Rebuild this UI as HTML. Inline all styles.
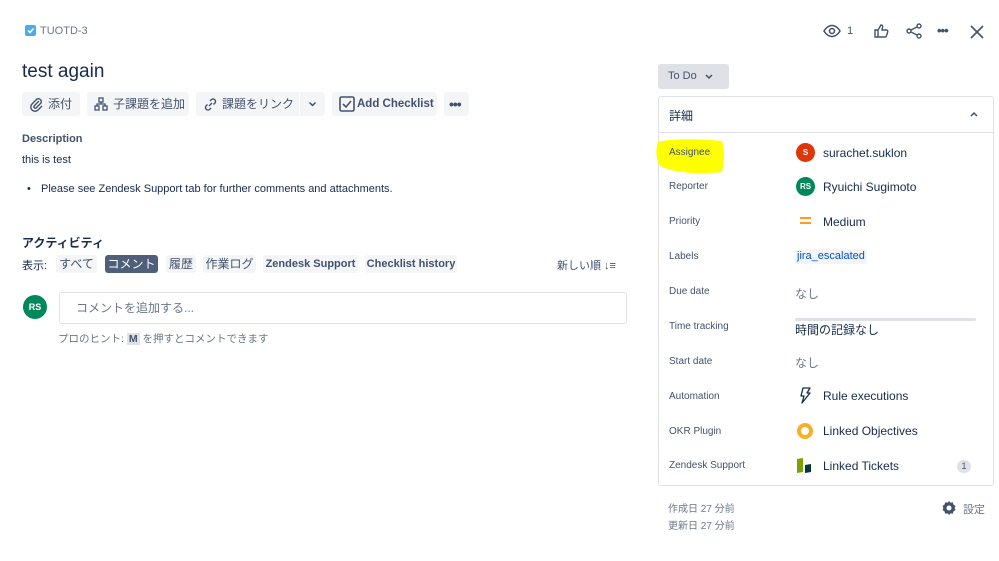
<!DOCTYPE html>
<html><head><meta charset="utf-8"><style>
*{margin:0;padding:0;box-sizing:border-box}
body{width:999px;height:561px;background:#fff;font-family:"Liberation Sans","Noto Sans CJK JP",sans-serif;color:#172b4d;position:relative;overflow:hidden;font-size:11px}
.a{position:absolute;white-space:nowrap}
.btn{position:absolute;top:92px;height:24px;background:#f4f5f7;border-radius:3px;color:#42526e;font-size:12px;line-height:24px;padding-left:8px;white-space:nowrap;overflow:hidden}
.tab{position:absolute;top:255px;height:18px;background:#f4f5f7;border-radius:3px;color:#42526e;font-size:11px;line-height:18px;text-align:center;font-weight:bold;white-space:nowrap}
.lbl{position:absolute;left:669px;font-size:10px;color:#42526e;line-height:12px;white-space:nowrap}
.val{position:absolute;left:823px;font-size:12px;color:#172b4d;line-height:13px;white-space:nowrap}
.av{position:absolute;width:19px;height:19px;border-radius:50%;color:#fff;font-size:8px;font-weight:bold;text-align:center;line-height:19px}
</style></head><body>
<div class="a" style="left:25px;top:25px;width:11px;height:11px;background:#4bade8;border-radius:2px"></div>
<svg class="a" style="left:25px;top:25px" width="11" height="11"><path d="M3 5.5l2 2 3.5-4" stroke="#fff" stroke-width="1.5" fill="none"/></svg>
<div class="a" style="left:40px;top:25px;font-size:11px;color:#6b778c">TUOTD-3</div>
<div class="a" style="left:22px;top:61px;font-size:19px;color:#172b4d">test again</div>

<div class="btn" style="left:22px;width:58px;padding-left:26px">添付</div>
<svg class="a" style="left:29px;top:97px" width="15" height="15" viewBox="0 0 15 15"><path d="M10 4L5 9a1.5 1.5 0 002 2l5-5a3 3 0 00-4-4L3 7a4 4 0 006 6l4-4" stroke="#42526e" stroke-width="1.4" fill="none"/></svg>
<div class="btn" style="left:87px;width:102px;padding-left:26px">子課題を追加</div>
<svg class="a" style="left:94px;top:97px" width="14" height="14"><rect x="5" y="1" width="4" height="4" fill="none" stroke="#42526e" stroke-width="1.3"/><rect x="1" y="9" width="4" height="4" fill="none" stroke="#42526e" stroke-width="1.3"/><rect x="9" y="9" width="4" height="4" fill="none" stroke="#42526e" stroke-width="1.3"/><path d="M7 5v2M3 9V7h8v2" stroke="#42526e" stroke-width="1.3" fill="none"/></svg>
<div class="btn" style="left:196px;width:103px;padding-left:26px;border-radius:3px 0 0 3px">課題をリンク</div>
<svg class="a" style="left:203px;top:97px" width="15" height="15"><path d="M6 9l3-3M7 4l1.5-1.5a2.5 2.5 0 013.5 3.5L10.5 7.5M8 11l-1.5 1.5a2.5 2.5 0 01-3.5-3.5L4.5 7.5" stroke="#42526e" stroke-width="1.4" fill="none"/></svg>
<div class="btn" style="left:300px;width:25px;border-radius:0 3px 3px 0"></div>
<svg class="a" style="left:308px;top:101px" width="9" height="6"><path d="M1.5 1.5l3 3 3-3" stroke="#42526e" stroke-width="1.5" fill="none"/></svg>
<div class="btn" style="left:332px;width:105px;padding-left:25px;font-weight:bold;font-size:11.5px">Add Checklist</div>
<svg class="a" style="left:339px;top:96px" width="16" height="16"><rect x="1" y="1" width="14" height="14" rx="1.5" fill="none" stroke="#42526e" stroke-width="1.6"/><path d="M4 8l3 3 5-6" stroke="#42526e" stroke-width="1.6" fill="none"/></svg>
<div class="btn" style="left:444px;width:25px;padding:0"></div>
<div class="a" style="left:449px;top:102px;font-size:14px;line-height:4px;color:#42526e;font-weight:bold;letter-spacing:-1px">•••</div>

<div class="a" style="left:22px;top:133px;font-size:11px;font-weight:bold;color:#42526e">Description</div>
<div class="a" style="left:22px;top:154px;font-size:11px">this is test</div>
<div class="a" style="left:27px;top:183px;font-size:11px">•</div>
<div class="a" style="left:41px;top:183px;font-size:11px">Please see Zendesk Support tab for further comments and attachments.</div>

<div class="a" style="left:22px;top:234px;font-size:12px;font-weight:bold;color:#172b4d">アクティビティ</div>
<div class="a" style="left:22px;top:257px;font-size:11px">表示:</div>
<div class="tab" style="left:56px;width:41px;font-weight:normal;font-size:12px">すべて</div>
<div class="tab" style="left:105px;width:53px;background:#505f79;color:#fff;font-weight:normal;font-size:12px">コメント</div>
<div class="tab" style="left:166px;width:30px;font-weight:normal;font-size:12px">履歴</div>
<div class="tab" style="left:203px;width:53px;font-weight:normal;font-size:12px">作業ログ</div>
<div class="tab" style="left:263px;width:95px">Zendesk Support</div>
<div class="tab" style="left:365px;width:92px">Checklist history</div>
<div class="a" style="left:557px;top:257px;font-size:11px;color:#42526e">新しい順 ↓≡</div>

<div class="av" style="left:23px;top:295px;width:24px;height:24px;line-height:24px;background:#00875a;font-size:9px">RS</div>
<div class="a" style="left:59px;top:292px;width:568px;height:32px;border:1px solid #dfe1e6;border-radius:3px;padding:7px 16px;color:#6b778c;font-size:12px;line-height:16px">コメントを追加する...</div>
<div class="a" style="left:58px;top:331px;font-size:10.5px;color:#6b778c">プロのヒント: <span style="background:#dfe1e6;padding:0 2px;font-weight:bold;color:#42526e">M</span> を押すとコメントできます</div>

<svg class="a" style="left:823px;top:24px" width="18" height="14"><path d="M1 7s3-5.5 8-5.5S17 7 17 7s-3 5.5-8 5.5S1 7 1 7z" fill="none" stroke="#42526e" stroke-width="1.5"/><circle cx="9" cy="7" r="2.5" fill="none" stroke="#42526e" stroke-width="1.5"/></svg>
<div class="a" style="left:847px;top:25px;font-size:11px;color:#42526e">1</div>
<svg class="a" style="left:873px;top:23px" width="16" height="16"><path d="M2 7h3v7H2zM5 7l3-5c1.5 0 2 1 1.5 2.5L9 7h4.5c1 0 1.5 1 1.2 2l-1.3 4c-.3.7-.8 1-1.5 1H5" fill="none" stroke="#42526e" stroke-width="1.4"/></svg>
<svg class="a" style="left:906px;top:23px" width="16" height="16"><circle cx="3" cy="8" r="2" fill="none" stroke="#42526e" stroke-width="1.4"/><circle cx="13" cy="3" r="2" fill="none" stroke="#42526e" stroke-width="1.4"/><circle cx="13" cy="13" r="2" fill="none" stroke="#42526e" stroke-width="1.4"/><path d="M5 7l6-3M5 9l6 3" stroke="#42526e" stroke-width="1.4"/></svg>
<div class="a" style="left:937px;top:26px;font-size:13px;line-height:10px;color:#42526e;font-weight:bold;letter-spacing:-1px">•••</div>
<svg class="a" style="left:970px;top:25px" width="14" height="14"><path d="M1 1l12 12M13 1L1 13" stroke="#42526e" stroke-width="1.6"/></svg>

<div class="a" style="left:658px;top:64px;width:71px;height:25px;background:#dfe1e6;border-radius:3px;font-size:11px;line-height:25px;padding-left:10px;color:#42526e">To Do</div>
<svg class="a" style="left:705px;top:74px" width="8" height="6"><path d="M1 1l3 3 3-3" stroke="#42526e" stroke-width="1.5" fill="none"/></svg>

<div class="a" style="left:658px;top:96px;width:336px;height:390px;border:1px solid #dfe1e6;border-radius:3px"></div>
<div class="a" style="left:658px;top:132px;width:336px;height:1px;background:#dfe1e6"></div>
<div class="a" style="left:669px;top:107px;font-size:12px;color:#172b4d">詳細</div>
<svg class="a" style="left:970px;top:111px" width="8" height="6"><path d="M1 5l3-3 3 3" stroke="#42526e" stroke-width="1.5" fill="none"/></svg>

<svg class="a" style="left:652px;top:136px" width="76" height="40"><path d="M6 6C20 2 50 3 70 5c3 10 2 22 0 31-20 2-45 2-62-6C3 22 4 12 6 6z" fill="#ffff00"/></svg>
<div class="lbl" style="top:147px">Assignee</div>
<div class="lbl" style="top:181px">Reporter</div>
<div class="lbl" style="top:216px">Priority</div>
<div class="lbl" style="top:251px">Labels</div>
<div class="lbl" style="top:286px">Due date</div>
<div class="lbl" style="top:321px">Time tracking</div>
<div class="lbl" style="top:356px">Start date</div>
<div class="lbl" style="top:391px">Automation</div>
<div class="lbl" style="top:426px">OKR Plugin</div>
<div class="lbl" style="top:460px">Zendesk Support</div>

<div class="av" style="left:796px;top:143px;background:#de350b">S</div>
<div class="val" style="top:147px">surachet.suklon</div>
<div class="av" style="left:796px;top:177px;background:#00875a">RS</div>
<div class="val" style="top:181px">Ryuichi Sugimoto</div>
<div class="a" style="left:800px;top:217px;width:11px;height:2px;background:#ff991f"></div>
<div class="a" style="left:800px;top:222px;width:11px;height:2px;background:#ff991f"></div>
<div class="val" style="top:216px">Medium</div>
<div class="a" style="left:795px;top:249px;padding:0 2px;background:#f4f5f7;border-radius:3px;font-size:11px;color:#0052cc;line-height:15px">jira_escalated</div>
<div class="a" style="left:795px;top:285px;font-size:12px;color:#6b778c">なし</div>
<div class="a" style="left:795px;top:318px;width:181px;height:3px;background:#dfe1e6;border-radius:2px"></div>
<div class="a" style="left:795px;top:321px;font-size:12px;color:#172b4d">時間の記録なし</div>
<div class="a" style="left:795px;top:354px;font-size:12px;color:#6b778c">なし</div>
<svg class="a" style="left:798px;top:387px" width="14" height="18"><path d="M5 1h7L9 6h3L4 16l2-7H3z" fill="none" stroke="#172b4d" stroke-width="1.3" stroke-linejoin="round"/></svg>
<div class="val" style="top:390px">Rule executions</div>
<div class="a" style="left:797px;top:423px;width:16px;height:16px;border-radius:50%;border:4px solid #f6b026"></div>
<div class="val" style="top:425px">Linked Objectives</div>
<svg class="a" style="left:795px;top:456px" width="20" height="18"><path d="M2 3l6-1v14l-6 1z" fill="#78a300"/><path d="M10 9l6-1v8l-6 1z" fill="#03363d"/></svg>
<div class="val" style="top:460px">Linked Tickets</div>
<div class="a" style="left:957px;top:460px;width:14px;height:13px;border-radius:7px;background:#dfe1e6;font-size:9px;text-align:center;line-height:13px;color:#42526e">1</div>

<div class="a" style="left:668px;top:500px;font-size:10px;color:#6b778c">作成日 27 分前</div>
<div class="a" style="left:668px;top:517px;font-size:10px;color:#6b778c">更新日 27 分前</div>
<svg class="a" style="left:941px;top:500px" width="16" height="16" viewBox="0 0 16 16"><path d="M8 1l1.5 1.8 2.3-.6.6 2.3L14.5 6l-.9 2 .9 2-2.1 1.5-.6 2.3-2.3-.6L8 15l-1.5-1.8-2.3.6-.6-2.3L1.5 10l.9-2-.9-2 2.1-1.5.6-2.3 2.3.6z" fill="#42526e"/><circle cx="8" cy="8" r="2.5" fill="#fff"/></svg>
<div class="a" style="left:963px;top:501px;font-size:11px;color:#6b778c">設定</div>
</body></html>
